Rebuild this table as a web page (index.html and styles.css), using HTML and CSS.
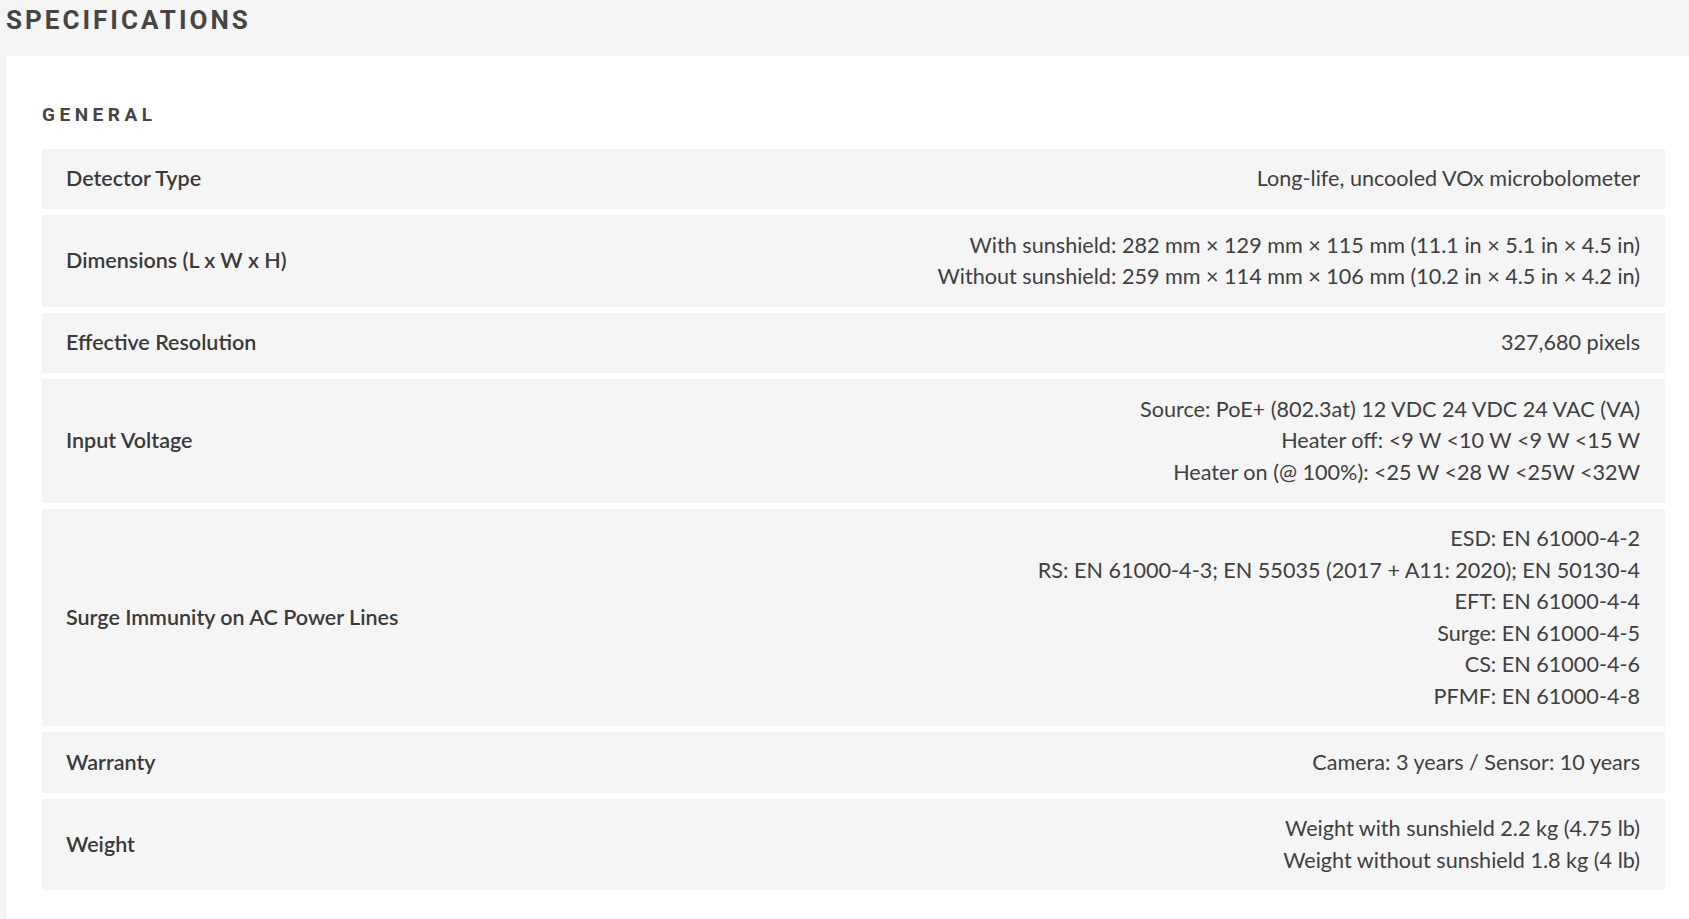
FILE: index.html
```html
<!DOCTYPE html>
<html lang="en">
  <head>
    <meta charset="UTF-8" />
    <title>Specifications</title>
    <link rel="stylesheet" href="styles.css">
  </head>
  <body>
    <h2 class="page-title">Specifications</h2>
    <section class="spec-panel">
      <h3 class="group-title">General</h3>
      <dl class="spec-list">
        <div class="spec-row">
          <dt>Detector Type</dt>
          <dd>Long-life, uncooled VOx microbolometer</dd>
        </div>
        <div class="spec-row">
          <dt>Dimensions (L x W x H)</dt>
          <dd>
            <span>With sunshield: 282 mm × 129 mm × 115 mm (11.1 in × 5.1 in × 4.5 in)</span>
            <span>Without sunshield: 259 mm × 114 mm × 106 mm (10.2 in × 4.5 in × 4.2 in)</span>
          </dd>
        </div>
        <div class="spec-row">
          <dt>Effective Resolution</dt>
          <dd>327,680 pixels</dd>
        </div>
        <div class="spec-row">
          <dt>Input Voltage</dt>
          <dd>
            <span>Source: PoE+ (802.3at) 12 VDC 24 VDC 24 VAC (VA)</span>
            <span>Heater off: &lt;9 W &lt;10 W &lt;9 W &lt;15 W</span>
            <span>Heater on (@ 100%): &lt;25 W &lt;28 W &lt;25W &lt;32W</span>
          </dd>
        </div>
        <div class="spec-row">
          <dt>Surge Immunity on AC Power Lines</dt>
          <dd>
            <span>ESD: EN 61000-4-2</span>
            <span>RS: EN 61000-4-3; EN 55035 (2017 + A11: 2020); EN 50130-4</span>
            <span>EFT: EN 61000-4-4</span>
            <span>Surge: EN 61000-4-5</span>
            <span>CS: EN 61000-4-6</span>
            <span>PFMF: EN 61000-4-8</span>
          </dd>
        </div>
        <div class="spec-row">
          <dt>Warranty</dt>
          <dd>Camera: 3 years / Sensor: 10 years</dd>
        </div>
        <div class="spec-row">
          <dt>Weight</dt>
          <dd>
            <span>Weight with sunshield 2.2 kg (4.75 lb)</span>
            <span>Weight without sunshield 1.8 kg (4 lb)</span>
          </dd>
        </div>
      </dl>
    </section>
  </body>
</html>
```

FILE: styles.css
```css
body {
  background: #f5f5f5;
  font-family: "Lato", "Liberation Sans", sans-serif;
  color: #404040;
  margin: 0;
}
.page-title {
  margin: 0;
  padding-left: 6px;
  font-family: "Roboto", "Liberation Sans", sans-serif;
  font-size: 26px;
  font-weight: 700;
  line-height: 40px;
  letter-spacing: 3px;
  text-transform: uppercase;
  color: #454545;
}
.spec-panel {
  background: #fff;
  margin: 16px 0 0 6px;
  padding: 47px 24px 36px 36px;
}
.group-title {
  margin: 0 0 22px 0;
  font-family: "Roboto", "Liberation Sans", sans-serif;
  font-size: 19px;
  font-weight: 700;
  line-height: 24px;
  letter-spacing: 4.5px;
  text-transform: uppercase;
  color: #454545;
}
.spec-list {
  margin: 0;
  display: flex;
  flex-direction: column;
  gap: 6px;
}
.spec-row {
  background: #f5f5f5;
  display: flex;
  justify-content: space-between;
  align-items: center;
  padding: 14.4px 25px 14.4px 24px;
  font-size: 21.6px;
  line-height: 31.5px;
}
.spec-row dt {
  font-size: 21.5px;
  font-weight: 600;
  color: #3a3a3a;
}
.spec-row dd {
  margin: 0;
  text-align: right;
  display: flex;
  flex-direction: column;
  align-items: flex-end;
}
```
